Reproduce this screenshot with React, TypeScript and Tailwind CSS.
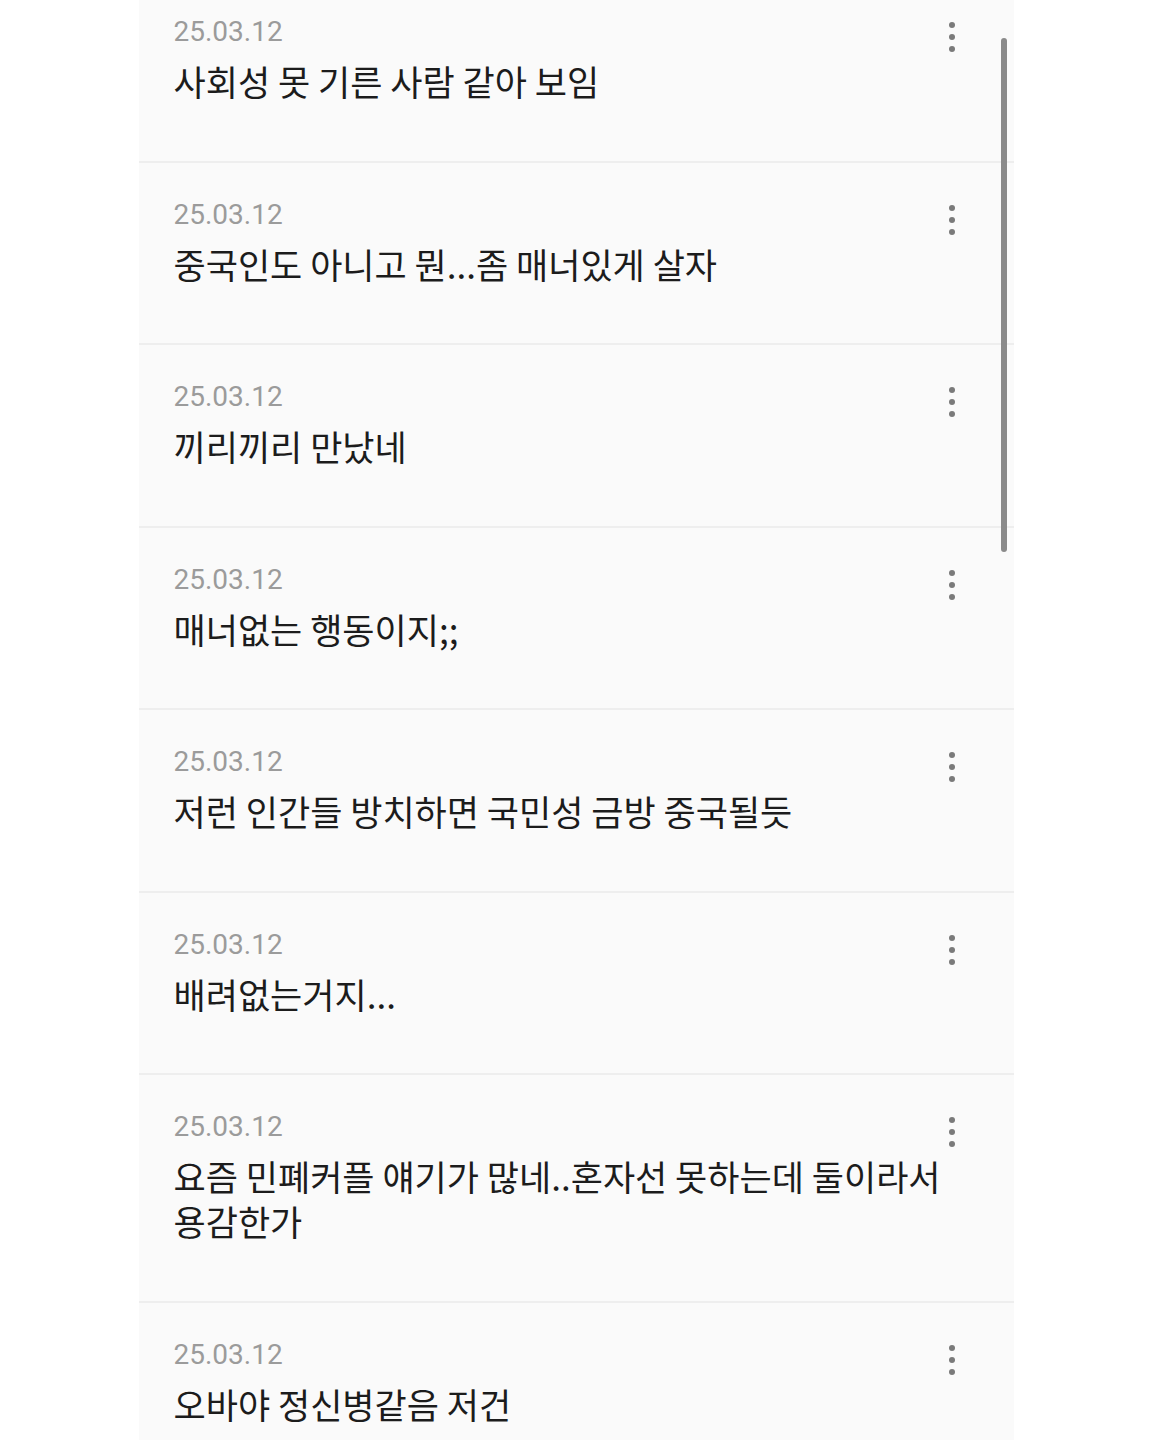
const comments = [
  '사회성 못 기른 사람 같아 보임',
  '중국인도 아니고 뭔...좀 매너있게 살자',
  '끼리끼리 만났네',
  '매너없는 행동이지;;',
  '저런 인간들 방치하면 국민성 금방 중국될듯',
  '배려없는거지...',
  '요즘 민폐커플 얘기가 많네..혼자선 못하는데 둘이라서 용감한가',
  '오바야 정신병같음 저건',
];

function MoreDots() {
  return (
    <div className="flex flex-col items-center gap-[6px] pt-[8px]">
      <span className="w-[6px] h-[6px] rounded-full bg-[#7a7a7a]" />
      <span className="w-[6px] h-[6px] rounded-full bg-[#7a7a7a]" />
      <span className="w-[6px] h-[6px] rounded-full bg-[#7a7a7a]" />
    </div>
  );
}

export default function App() {
  return (
    <div
      className="min-h-[1440px] bg-white overflow-hidden"
      style={{ fontFamily: 'Roboto, "Noto Sans CJK KR", sans-serif' }}
    >
      <div className="relative mx-auto w-[875px] bg-[#fafafa] -mt-[20px]">
        {comments.map((text, i) => (
          <div
            key={i}
            className="flex pl-[35px] pr-[59px] pt-[34px] pb-[57.5px] border-b-2 border-[#eeeeee]"
          >
            <div className="flex-1 pr-[4px]">
              <div className="text-[28px] leading-[36px] text-[#9b9b9b]">25.03.12</div>
              <div className="mt-[8px] text-[35px] leading-[45px] text-[#1c1c1c] font-['Noto_Sans_CJK_KR',sans-serif]">
                {text}
              </div>
            </div>
            <MoreDots />
          </div>
        ))}
        {/* scroll thumb */}
        <div className="absolute right-[7px] top-[58px] w-[6px] h-[514px] rounded-full bg-[#8a8a8a]" />
      </div>
    </div>
  );
}
